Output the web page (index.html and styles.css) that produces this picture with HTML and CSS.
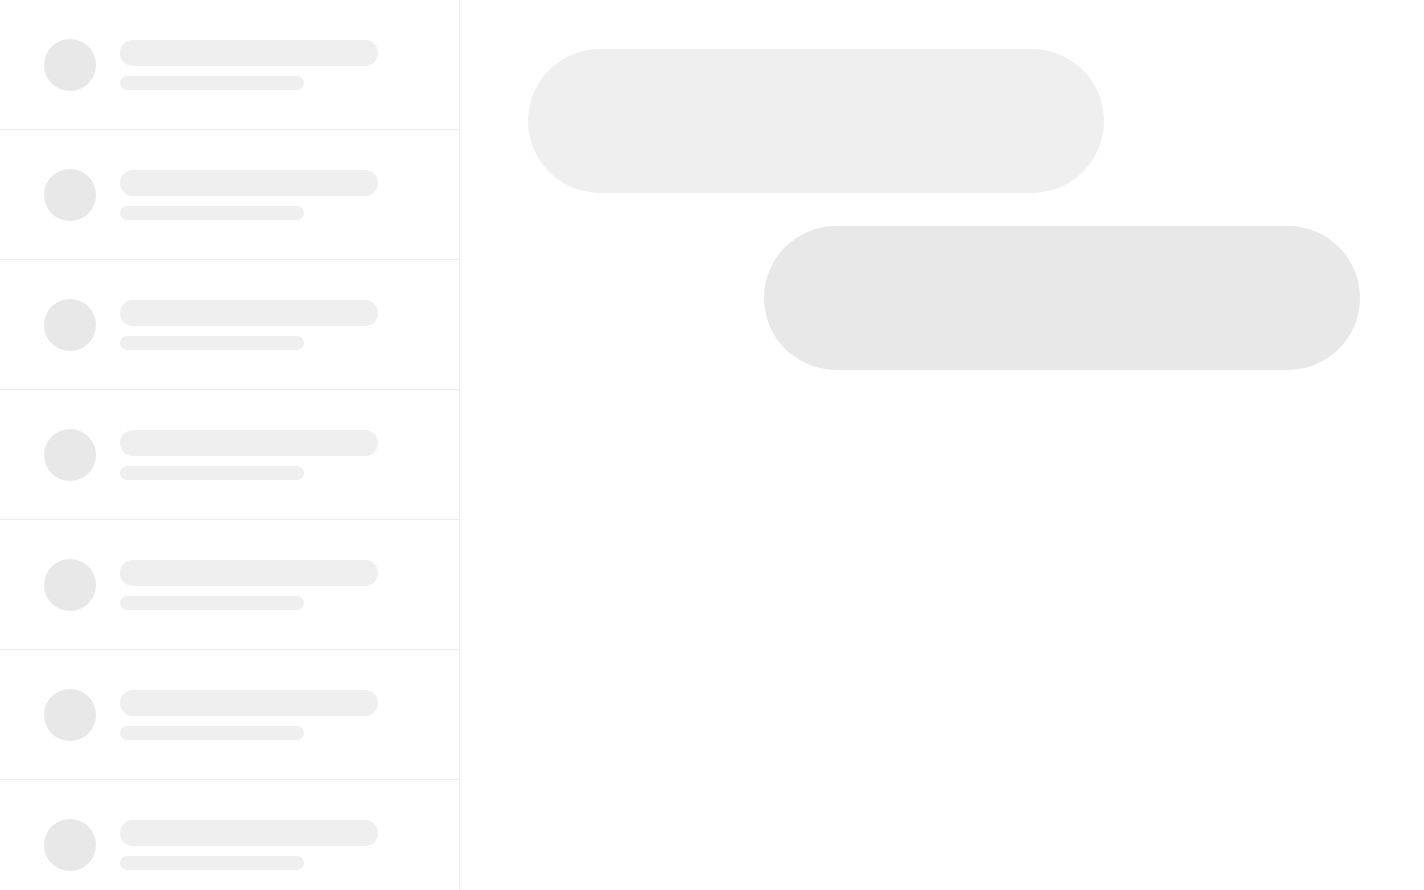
FILE: index.html
```html
<!DOCTYPE html>
<html lang="en">
<head>
<meta charset="utf-8">
<title>Loading</title>
<link rel="stylesheet" href="styles.css">
</head>
<body>
<div class="app">
  <aside class="sidebar">
    <div class="row"><div class="avatar"></div><div class="lines"><div class="title"></div><div class="sub"></div></div></div>
    <div class="row"><div class="avatar"></div><div class="lines"><div class="title"></div><div class="sub"></div></div></div>
    <div class="row"><div class="avatar"></div><div class="lines"><div class="title"></div><div class="sub"></div></div></div>
    <div class="row"><div class="avatar"></div><div class="lines"><div class="title"></div><div class="sub"></div></div></div>
    <div class="row"><div class="avatar"></div><div class="lines"><div class="title"></div><div class="sub"></div></div></div>
    <div class="row"><div class="avatar"></div><div class="lines"><div class="title"></div><div class="sub"></div></div></div>
    <div class="row"><div class="avatar"></div><div class="lines"><div class="title"></div><div class="sub"></div></div></div>
  </aside>
  <main class="chat">
    <div class="bubble bubble-in"></div>
    <div class="bubble bubble-out"></div>
  </main>
</div>
</body>
</html>
```
FILE: styles.css
```css
html, body {
  margin: 0;
  padding: 0;
  height: 100%;
  background: #ffffff;
  overflow: hidden;
  font-family: "Liberation Sans", Arial, sans-serif;
}
.app {
  display: flex;
  height: 890px;
}
.sidebar {
  width: 459px;
  flex: 0 0 459px;
  border-right: 1px solid #ececec;
  display: flex;
  flex-direction: column;
}
.row {
  flex: 0 0 auto;
  height: 129px;
  border-bottom: 1px solid #ececec;
  display: flex;
  align-items: center;
  padding-left: 44px;
  gap: 24px;
  box-sizing: content-box;
}
.avatar {
  width: 52px;
  height: 52px;
  border-radius: 50%;
  background: #e8e8e8;
  flex: 0 0 auto;
}
.lines {
  display: flex;
  flex-direction: column;
  gap: 10px;
}
.title {
  width: 258px;
  height: 26px;
  border-radius: 13px;
  background: #efefef;
}
.sub {
  width: 184px;
  height: 14px;
  border-radius: 7px;
  background: #efefef;
}
.chat {
  flex: 1;
  display: flex;
  flex-direction: column;
  padding: 49px 64px 0 68px;
  gap: 33px;
}
.bubble {
  height: 144px;
  border-radius: 72px;
}
.bubble-in {
  width: 576px;
  background: #efefef;
  align-self: flex-start;
}
.bubble-out {
  width: 596px;
  background: #e8e8e8;
  align-self: flex-end;
}
```
